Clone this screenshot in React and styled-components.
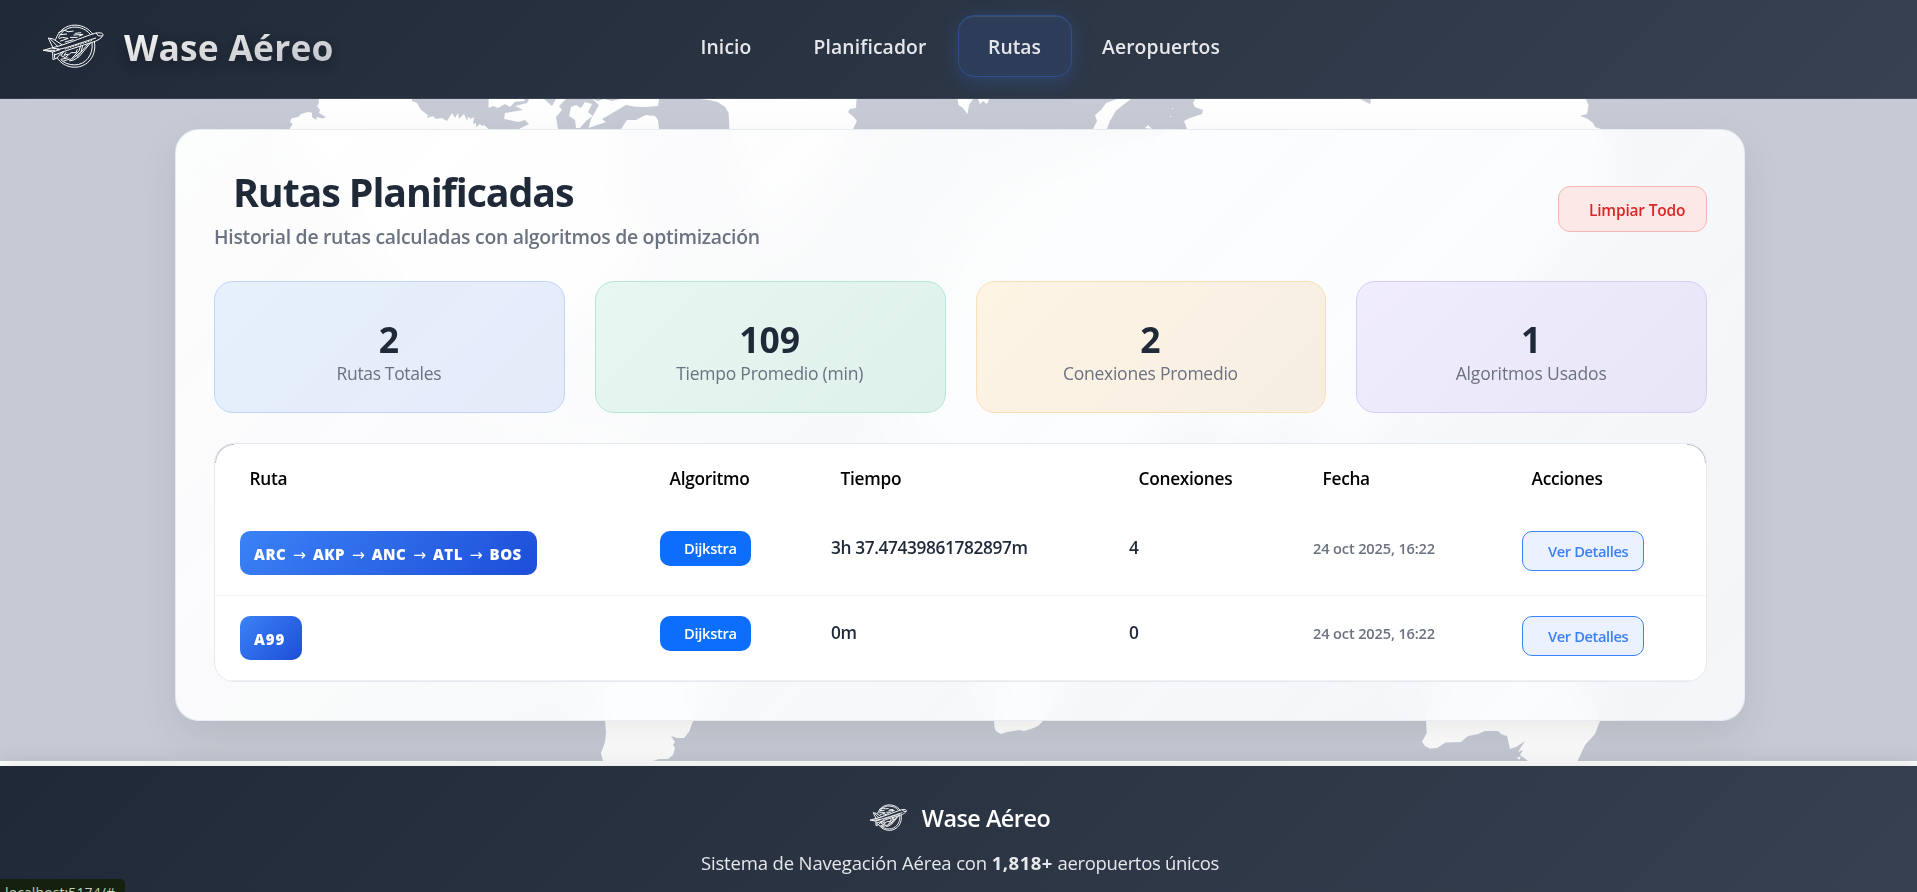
import React, { Fragment } from 'react';
import styled, { createGlobalStyle, css } from 'styled-components';

const GlobalStyle = createGlobalStyle`
  *, *::before, *::after { box-sizing: border-box; }
  html, body { margin: 0; height: 892px; overflow: hidden; }
  body { background: #fff; font-family: "Open Sans", "Noto Sans", sans-serif; color: #1f2937; }
  h1, p { margin: 0; }
  button { font-family: inherit; cursor: pointer; }
`;

const Page = styled.div`
  width: 1920px;
  height: 892px;
  display: flex;
  flex-direction: column;
  overflow: hidden;
`;

const Header = styled.header`
  flex: none;
  height: 99px;
  padding-bottom: 6px;
  display: grid;
  grid-template-columns: 1fr auto 1fr;
  align-items: center;
  background: linear-gradient(135deg, #1f2937 0%, #374151 100%);
  border-bottom: 1px solid rgba(255, 255, 255, 0.1);
  z-index: 1;
`;

const Brand = styled.div`
  display: flex;
  align-items: center;
  gap: 20px;
  padding-left: 43px;
`;

const BrandName = styled.span`
  padding-top: 2px;
  font-size: 35.4px;
  font-weight: 700;
  line-height: 48px;
  letter-spacing: 0.22px;
  color: transparent;
  background: linear-gradient(170deg, #f3f4f3 15%, #dcdcde 50%, #bfc4cd 90%);
  background-clip: text;
  filter: drop-shadow(0 4px 6px rgba(0, 0, 0, 0.35));
`;

const Nav = styled.nav`
  display: flex;
`;

const NavItem = styled.a`
  width: ${(p) => p.$width}px;
  height: 62px;
  display: flex;
  align-items: center;
  justify-content: center;
  padding-top: 1px;
  border: 1px solid transparent;
  border-radius: 16px;
  font-size: 19.3px;
  font-weight: 600;
  letter-spacing: 0.14px;
  color: #e5e7eb;
  ${(p) =>
    p.$active &&
    css`
      background: rgba(45, 67, 110, 0.5);
      border-color: #2d5090;
      letter-spacing: 0;
      box-shadow: 0 4px 20px rgba(59, 130, 246, 0.24), inset 0 1px 0 rgba(255, 255, 255, 0.1);
    `}
`;

const Main = styled.main`
  flex: none;
  height: 662px;
  display: grid;
  background: #c6cad4;
  overflow: hidden;
`;

const WorldMap = styled.svg`
  grid-area: 1 / 1;
  display: block;
  width: 1920px;
  height: 662px;
`;

const Card = styled.section`
  grid-area: 1 / 1;
  justify-self: center;
  align-self: start;
  width: 1570px;
  height: 592px;
  margin-top: 30px;
  padding: 38px 37px 38px 38px;
  border: 1px solid rgba(226, 232, 240, 0.8);
  border-radius: 24px;
  background: linear-gradient(135deg, rgba(255, 255, 255, 0.95) 0%, rgba(248, 250, 252, 0.9) 100%);
  backdrop-filter: blur(20px);
  box-shadow: 0 16px 40px rgba(0, 0, 0, 0.08);
`;

const CardHeader = styled.div`
  display: flex;
  align-items: center;
  justify-content: space-between;
  height: 82px;
  margin-bottom: 31px;
`;

const Title = styled.h1`
  padding: 1px 0 0 19px;
  font-size: 39.4px;
  font-weight: 700;
  line-height: 46px;
  letter-spacing: -1.13px;
  color: #1f2937;
`;

const Subtitle = styled.p`
  margin-top: 8px;
  font-size: 19.4px;
  font-weight: 600;
  line-height: 28px;
  letter-spacing: -0.28px;
  color: #6b7280;
`;

const ClearButton = styled.button`
  width: 149px;
  height: 46px;
  padding: 1px 0 0 30px;
  text-align: left;
  border: 1px solid #fbb4b6;
  border-radius: 12px;
  background: #fce8e7;
  font-size: 15.5px;
  font-weight: 600;
  letter-spacing: -0.19px;
  color: #dc2626;
`;

const Stats = styled.div`
  display: grid;
  grid-template-columns: repeat(4, 1fr);
  gap: 30px;
  margin-bottom: 30px;
`;

const tones = {
  blue: ['rgba(227,240,253,.9)', 'rgba(227,231,248,.9)', '#bfd3fb'],
  green: ['rgba(228,247,239,.95)', 'rgba(222,240,234,.95)', '#b5e6d6'],
  amber: ['rgba(254,243,226,.95)', 'rgba(246,237,226,.95)', '#fadfb4'],
  violet: ['rgba(240,236,254,.95)', 'rgba(231,228,246,.95)', '#d7cbf8'],
};

const StatCard = styled.div`
  height: 132px;
  padding: 36px 1px 0 0;
  text-align: center;
  border: 1px solid ${(p) => tones[p.$tone][2]};
  border-radius: 19px;
  background: linear-gradient(135deg, ${(p) => tones[p.$tone][0]}, ${(p) => tones[p.$tone][1]});
`;

const StatValue = styled.div`
  font-size: 35.5px;
  font-weight: 700;
  line-height: 42px;
  letter-spacing: -0.1px;
`;

const StatLabel = styled.div`
  font-size: 17.5px;
  line-height: 27px;
  letter-spacing: ${(p) => p.$tracking}px;
  color: #6b7280;
`;

const Table = styled.div`
  position: relative;
  border: 1px solid #e5e9f0;
  border-radius: 20px;
  background: #fff;
  overflow: hidden;
  &::before, &::after {
    content: '';
    position: absolute;
    top: 0;
    width: 19px;
    height: 19px;
    border-top: 1px solid #b4b8bf;
  }
  &::before { left: 0; border-left: 1px solid #b4b8bf; border-top-left-radius: 19px; }
  &::after { right: 0; border-right: 1px solid #b4b8bf; border-top-right-radius: 19px; }
`;

const columns = '420px 171px 298px 184px 209px 1fr';

const HeadRow = styled.div`
  display: grid;
  grid-template-columns: ${columns};
  align-items: center;
  height: 67px;
`;

const HeadCell = styled.div`
  padding: 1px 0 0 34.6px;
  font-size: 17.3px;
  font-weight: 600;
  letter-spacing: -0.3px;
  color: #000;
`;

const BodyRow = styled.div`
  display: grid;
  grid-template-columns: ${columns};
  height: 85px;
  border-bottom: 1px solid #eff1f4;
`;

const Cell = styled.div`
  padding: 20px 0 0 25px;
`;

const RouteBadge = styled.div`
  width: ${(p) => p.$width}px;
  height: 44px;
  padding: 1px 0 0 14px;
  border-radius: 10px;
  background: linear-gradient(135deg, #3b82f6, #1d4ed8);
  font-size: 15px;
  font-weight: 800;
  line-height: 44px;
  letter-spacing: ${(p) => p.$tracking}px;
  white-space: nowrap;
  color: #fff;
`;

const Arrow = styled.span`
  display: inline-block;
  width: 17.8px;
  text-align: center;
  font-family: "DejaVu Sans", sans-serif;
  font-size: 15.5px;
  font-weight: 400;
  letter-spacing: 0;
`;

const AlgorithmBadge = styled.div`
  width: 91px;
  height: 35px;
  padding-left: 24px;
  border-radius: 10px;
  background: #0d6efd;
  font-size: 14.7px;
  font-weight: 600;
  line-height: 35px;
  letter-spacing: -0.31px;
  color: #fff;
`;

const Value = styled.div`
  font-size: 17.3px;
  font-weight: 600;
  line-height: 33px;
  letter-spacing: -0.38px;
`;

const DateText = styled.div`
  font-size: 14.6px;
  font-weight: 600;
  line-height: 35px;
  letter-spacing: -0.15px;
  color: #6b7280;
`;

const DetailsButton = styled.button`
  display: block;
  width: 122px;
  height: 40px;
  padding: 0 0 0 25px;
  text-align: left;
  border: 1px solid #3b82f6;
  border-radius: 10px;
  background: #ebf1fe;
  font-size: 14.7px;
  font-weight: 600;
  letter-spacing: -0.4px;
  color: #3b82f6;
`;

const Footer = styled.footer`
  flex: none;
  height: 190px;
  margin-top: 5px;
  padding-top: 33px;
  text-align: center;
  background: linear-gradient(135deg, #1f2937 0%, #374151 100%);
  box-shadow: 0 -4px 20px rgba(0, 0, 0, 0.1);
  z-index: 1;
`;

const FooterBrand = styled.div`
  display: flex;
  align-items: center;
  justify-content: center;
  gap: 15px;
  height: 37px;
  margin-bottom: 11px;
  font-size: 23.4px;
  font-weight: 600;
  letter-spacing: -0.5px;
  color: #fff;
`;

const FooterText = styled.p`
  font-size: 18.5px;
  line-height: 31px;
  letter-spacing: -0.15px;
  color: #e5e7eb;
  strong { font-weight: 700; letter-spacing: 0.5px; }
  span { letter-spacing: -0.33px; }
`;

const StatusBubble = styled.div`
  position: fixed;
  left: 0;
  bottom: 0;
  width: 125px;
  height: 13px;
  padding: 4px 0 0 5px;
  overflow: hidden;
  border-top-right-radius: 5px;
  background: #14210f;
  font-size: 14px;
  line-height: 19px;
  letter-spacing: 0.1px;
  color: #bcd0b0;
  z-index: 2;
`;

function Logo({ width, height, stroke = 3 }) {
  return (
    <svg width={width} height={height} viewBox="37 26 184 132" fill="none" stroke="#fff" strokeLinecap="round" strokeLinejoin="round" strokeWidth={stroke}>
      <path d="M75 72C84 46 106 29 133 29C157 29 177 41 187 56" />
      <path d="M84 66C94 46 112 35 133 35C152 35 168 43 178 55" />
      <path d="M192 80C200 120 172 156 133 156C109 156 90 144 80 128" />
      <path d="M185 83C190 118 165 149 133 149C115 149 101 143 91 134" />
      <path d="M66 97C100 90 150 68 186 56C202 50 219 51 218 59C214 71 196 78 176 84C142 95 104 106 72 119" />
      <path d="M198 53L203 61L215 62M80 103C112 97 152 82 196 68" />
      <path d="M104 101L186 75" strokeDasharray="3 5" />
      <path d="M67 97L53 68L68 71L94 88M60 72L80 92" />
      <path d="M38 105L62 98L84 101M38 105L66 110L88 103M48 105L72 105" />
      <path d="M66 111L67 133L78 129L96 109M72 116L72 128" />
      <path d="M150 92L146 106L117 137L130 134L146 124L181 82M156 93L152 109L126 131M172 87L140 124" />
      <path d="M99 110L91 121L104 127L122 112L137 112L140 103M106 112L100 120L112 117M92 132L112 128M98 138L118 131" />
      <path d="M84 52L100 44L113 49L128 47M88 58L108 56M86 69L96 66L113 69L90 77M104 80L128 73M134 54L151 52M130 59L158 57L146 62M120 66L140 66" />
    </svg>
  );
}

/* Land masses, drawn in page coordinates (the view box starts below the header). */
function Continents() {
  return (
    <WorldMap viewBox="0 99 1920 662" fill="#fefefe">
      <path d="M318.8 99L318.8 104L317 106L320 110L319 113L326 117L323 118.5L317 117L316 120L312 117V112.7L308 112L301 114L298 117L291.4 118.5L290 122L292.5 124L289.8 129L340 200L400 290L450 380L520 430L560 400L520 360L590 310L650 250L610 180L621 129L627 120L636 120L645.7 115L655 116L658 120L659 129H558L555 124L552 127L548 121L545 129H488.6L484 125L482 126L480 124L476 127V123L473 124L474 117L471 119L468 116.7L467 121L464 114L459 119L458 113L455 118L452 113L447 121L441.6 118L436 119L433 116L427 118L428 115L421 110L417 103L412 101V99Z" />
      <path d="M488.6 99V108L493 106L498 108L505 104L510 107L515 101.7L525 101L524 99Z" />
      <path d="M529 99L527 103L515 106L523 110L505 113L504 119L518 122L525 120L529 124L519 129H558L556 117L562 110L559 106L566 99L556 99L552 106L544 99Z" />
      <path d="M571 107L576 105L581 108L585 102L592 104L588 112L592.6 116L586 121L580 128L576 128L575 120L569 116Z" />
      <path d="M592 99L598 101L604 99L612 101L620 99H659L658 106L645 107L635 106.7L626 105L609 115L602 119L606 122L588.6 128L591 119L599 105Z" />
      <path d="M729.4 129L728.6 113L725 106.7L717 101.7L709 100L700 99H856.5L856 108L850 109L848 112L853.7 117L857 121L853 129L800 190L770 240L745 180Z" />
      <path d="M957.5 99L958.6 105L963 108L967.5 114L969 105L973 99ZM978 99L980 104L983 101L987 104L989 99Z" />
      <path d="M1131 99L1123 105L1115.7 111L1110 121L1106.8 129H1093L1097 121L1095 115L1101 110L1106 103L1117 99Z" />
      <path d="M1195 99L1193 103L1195 107L1203 110L1202 114L1190 118L1184 121L1187 129L1090 150L1020 180L960 240L930 310L900 360L910 430L960 470L990 560L994 721L994.6 728L996 731L1000.7 734L1007 732L1013 731L1019 730L1024 731L1031 729L1038 726L1043 721L1100 600L1110 500L1180 400L1230 440L1300 400L1340 480L1390 420L1480 370L1540 270L1620 180L1601 129L1595 127L1593 123L1588 119L1583 117L1580 116L1587 114L1588.5 105L1586 99H1371L1370 104L1364 101L1360 99Z" />
      <path d="M560 430L620 440L700 510L760 560L740 620L700 680L693 721L689 732L684 738L677 738L671 736L675 742L673 745L675 748L673 755L668 759L659 759L653 761H603L601 753L605 742L606 733L605 721L590 600Z" />
      <path d="M1426 721L1426.7 733L1422 741.7L1425 746L1430 748.5L1437 748L1445.6 742.5L1461 742L1468 736L1478 734L1485 731L1498 731L1501 734L1507 736L1510 749L1516 747L1525 741L1518 752L1523 750L1520 755L1528 761H1577.5L1585 745L1595 734L1600 721L1570 640L1500 590L1440 650Z" />
      <path d="M1170 116h1v1h-1zM1172 108h1v1h-1zM1145 128l3 -3l4 4zM1517 757l4 0l-2 3z" />
    </WorldMap>
  );
}

const navItems = [
  { label: 'Inicio', width: 113 },
  { label: 'Planificador', width: 175 },
  { label: 'Rutas', width: 114, active: true },
  { label: 'Aeropuertos', width: 179 },
];

const stats = [
  { value: '2', label: 'Rutas Totales', tone: 'blue', tracking: -0.35 },
  { value: '109', label: 'Tiempo Promedio (min)', tone: 'green', tracking: -0.24 },
  { value: '2', label: 'Conexiones Promedio', tone: 'amber', tracking: -0.24 },
  { value: '1', label: 'Algoritmos Usados', tone: 'violet', tracking: -0.14 },
];

const headings = ['Ruta', 'Algoritmo', 'Tiempo', 'Conexiones', 'Fecha', 'Acciones'];

const routes = [
  { stops: ['ARC', 'AKP', 'ANC', 'ATL', 'BOS'], width: 297, tracking: 0.5, time: '3h 37.47439861782897m', hops: '4' },
  { stops: ['A99'], width: 62, tracking: 0.9, time: '0m', hops: '0' },
];

export default function App() {
  return (
    <Page>
      <GlobalStyle />
      <Header>
        <Brand>
          <Logo width={61} height={44} />
          <BrandName>Wase Aéreo</BrandName>
        </Brand>
        <Nav>
          {navItems.map((n) => (
            <NavItem key={n.label} $width={n.width} $active={n.active}>{n.label}</NavItem>
          ))}
        </Nav>
      </Header>
      <Main>
        <Continents />
        <Card>
          <CardHeader>
            <div>
              <Title>Rutas Planificadas</Title>
              <Subtitle>Historial de rutas calculadas con algoritmos de optimización</Subtitle>
            </div>
            <ClearButton>Limpiar Todo</ClearButton>
          </CardHeader>
          <Stats>
            {stats.map((s) => (
              <StatCard key={s.label} $tone={s.tone}>
                <StatValue>{s.value}</StatValue>
                <StatLabel $tracking={s.tracking}>{s.label}</StatLabel>
              </StatCard>
            ))}
          </Stats>
          <Table>
            <HeadRow>
              {headings.map((h) => (
                <HeadCell key={h}>{h}</HeadCell>
              ))}
            </HeadRow>
            {routes.map((r) => (
              <BodyRow key={r.stops[0]}>
                <Cell>
                  <RouteBadge $width={r.width} $tracking={r.tracking}>
                    {r.stops.map((stop, i) => (
                      <Fragment key={stop}>
                        {i > 0 && <> <Arrow>→</Arrow> </>}
                        {stop}
                      </Fragment>
                    ))}
                  </RouteBadge>
                </Cell>
                <Cell><AlgorithmBadge>Dijkstra</AlgorithmBadge></Cell>
                <Cell><Value>{r.time}</Value></Cell>
                <Cell><Value>{r.hops}</Value></Cell>
                <Cell><DateText>24 oct 2025, 16:22</DateText></Cell>
                <Cell><DetailsButton>Ver Detalles</DetailsButton></Cell>
              </BodyRow>
            ))}
          </Table>
        </Card>
      </Main>
      <Footer>
        <FooterBrand>
          <Logo width={37} height={27} stroke={4.5} />
          Wase Aéreo
        </FooterBrand>
        <FooterText>
          Sistema de Navegación Aérea con <strong>1,818+</strong> <span>aeropuertos únicos</span>
        </FooterText>
      </Footer>
      <StatusBubble>localhost:5174/#</StatusBubble>
    </Page>
  );
}
